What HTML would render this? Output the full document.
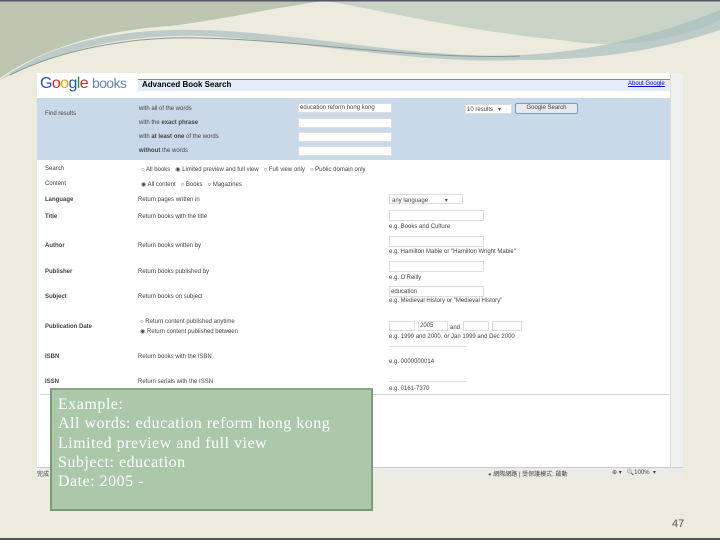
<!DOCTYPE html>
<html><head><meta charset="utf-8"><style>
*{margin:0;padding:0;box-sizing:border-box}
body{width:720px;height:540px;position:relative;overflow:hidden;background:#ecebdd;font-family:"Liberation Sans",Arial,sans-serif}
.a{position:absolute;white-space:nowrap}
.s{font-size:6px;color:#444}
.b{font-weight:bold}
.in{position:absolute;background:#fff;border:1px solid #ddd}
</style></head><body>
<svg class="a" style="left:0;top:0" width="720" height="80">
<path d="M0 0H720V20C680 40 620 50 560 40 460 30 380 10 320 0Z" fill="#c9d4c6"/>
<path d="M0 0H330C260 10 220 20 170 26 100 30 40 50 0 78Z" fill="#bcc6b0"/>
<path d="M0 80C40 50 100 28 200 30 300 32 420 60 520 55 600 52 670 30 720 10V30C660 50 600 60 520 60 420 65 300 40 200 36 110 34 50 55 0 80Z" fill="#a9bfc0" opacity=".7"/>
<path d="M10 75C60 50 130 36 200 38 300 40 420 60 520 56" stroke="#8a9a90" stroke-width="1" fill="none"/>
<rect x="0" y="0" width="720" height="1.5" fill="#556"/>
</svg>
<div class="a" style="left:37px;top:73px;width:646px;height:406px;background:#fff"></div>
<div class="a" style="left:670px;top:73px;width:13px;height:394px;background:#f0f0ef;border-left:1px solid #ddd"></div>
<div class="a" style="left:40px;top:75px;font-size:16px;color:#3366cc;letter-spacing:-.6px"><span style="color:#1a56c9">G</span><span style="color:#d22">o</span><span style="color:#e9a800">o</span><span style="color:#1a56c9">g</span><span style="color:#1a9a2a">l</span><span style="color:#d22">e</span> <span style="color:#6688aa;font-size:14px">books</span></div>
<div class="a" style="left:138px;top:79px;width:532px;height:12px;background:#e5ecf9;border-top:1px solid #6b90c9"></div>
<div class="a b" style="left:142px;top:80px;font-size:8px">Advanced Book Search</div>
<div class="a" style="left:628px;top:81px;font-size:6px;color:#00c;text-decoration:underline">About Google</div>
<div class="a" style="left:37px;top:98px;width:633px;height:62px;background:#c9d9ea"></div>
<div class="a s" style="left:45px;top:111px">Find results</div>
<div class="a s" style="left:139px;top:106px">with all of the words</div>
<div class="a s" style="left:139px;top:120px">with the <b>exact phrase</b></div>
<div class="a s" style="left:139px;top:134px">with <b>at least one</b> of the words</div>
<div class="a s" style="left:139px;top:148px"><b>without</b> the words</div>
<div class="in" style="left:298px;top:103px;width:94px;height:10px"></div><div class="a s" style="left:300px;top:105px">education reform hong kong</div>
<div class="in" style="left:298px;top:118px;width:94px;height:10px"></div>
<div class="in" style="left:298px;top:132px;width:94px;height:10px"></div>
<div class="in" style="left:298px;top:146px;width:94px;height:10px"></div>
<div class="in" style="left:465px;top:104px;width:47px;height:10px"></div><div class="a s" style="left:467px;top:106px">10 results &nbsp;&nbsp;▾</div>
<div class="a s" style="left:515px;top:103px;width:63px;height:11px;background:#e6e9ee;border:1px solid #7a9ac0;border-radius:2px;text-align:center;padding-top:1px">Google Search</div>
<div class="a s" style="left:45px;top:166px">Search</div>
<div class="a s" style="left:141px;top:166px">○ All books &nbsp; ◉ Limited preview and full view &nbsp; ○ Full view only &nbsp; ○ Public domain only</div>
<div class="a s" style="left:45px;top:181px">Content</div>
<div class="a s" style="left:141px;top:181px">◉ All content &nbsp; ○ Books &nbsp; ○ Magazines</div>
<div class="a s b" style="left:45px;top:197px">Language</div><div class="a s" style="left:138px;top:197px">Return pages written in</div>
<div class="in" style="left:389px;top:194px;width:74px;height:10px"></div><div class="a s" style="left:392px;top:197px">any language &nbsp;&nbsp;&nbsp;&nbsp;&nbsp;&nbsp;&nbsp;&nbsp;&nbsp;▾</div>
<div class="a s b" style="left:45px;top:214px">Title</div><div class="a s" style="left:138px;top:214px">Return books with the title</div>
<div class="in" style="left:389px;top:210px;width:95px;height:11px"></div><div class="a s" style="left:389px;top:224px">e.g. Books and Culture</div>
<div class="a s b" style="left:45px;top:243px">Author</div><div class="a s" style="left:138px;top:243px">Return books written by</div>
<div class="in" style="left:389px;top:236px;width:95px;height:11px"></div><div class="a s" style="left:389px;top:249px">e.g. Hamilton Mabie or "Hamilton Wright Mabie"</div>
<div class="a s b" style="left:45px;top:269px">Publisher</div><div class="a s" style="left:138px;top:269px">Return books published by</div>
<div class="in" style="left:389px;top:261px;width:95px;height:11px"></div><div class="a s" style="left:389px;top:275px">e.g. O'Reilly</div>
<div class="a s b" style="left:45px;top:294px">Subject</div><div class="a s" style="left:138px;top:294px">Return books on subject</div>
<div class="in" style="left:389px;top:286px;width:95px;height:11px"></div><div class="a s" style="left:391px;top:289px">education</div><div class="a s" style="left:389px;top:298px">e.g. Medieval History or "Medieval History"</div>
<div class="a s b" style="left:45px;top:324px">Publication Date</div>
<div class="a s" style="left:140px;top:319px">○ Return content published anytime</div>
<div class="a s" style="left:140px;top:328px">◉ Return content published between</div>
<div class="in" style="left:389px;top:321px;width:26px;height:10px"></div>
<div class="in" style="left:418px;top:321px;width:30px;height:10px"></div><div class="a s" style="left:420px;top:323px">2005</div>
<div class="a s" style="left:450px;top:325px">and</div>
<div class="in" style="left:463px;top:321px;width:26px;height:10px"></div>
<div class="in" style="left:492px;top:321px;width:30px;height:10px"></div>
<div class="a s" style="left:389px;top:334px">e.g. 1999 and 2000, or Jan 1999 and Dec 2000</div>
<div class="a s b" style="left:45px;top:354px">ISBN</div><div class="a s" style="left:138px;top:354px">Return books with the ISBN</div>
<div class="a" style="left:389px;top:346px;width:78px;height:1px;background:#ddd"></div><div class="a s" style="left:389px;top:359px">e.g. 0000000014</div>
<div class="a s b" style="left:45px;top:379px">ISSN</div><div class="a s" style="left:138px;top:379px">Return serials with the ISSN</div>
<div class="a" style="left:389px;top:381px;width:78px;height:1px;background:#ddd"></div><div class="a s" style="left:389px;top:386px">e.g. 0161-7370</div>
<div class="a" style="left:40px;top:394px;width:630px;height:1px;background:#c9d9ea"></div>
<div class="a" style="left:37px;top:467px;width:646px;height:12px;background:#ecebe6;border-top:1px solid #ccc"></div>
<div class="a s" style="left:37px;top:469px;font-family:'Noto Sans CJK TC',sans-serif">完成</div>
<div class="a s" style="left:488px;top:469px;font-family:'Liberation Sans','Noto Sans CJK TC',sans-serif"><span style="color:#3a7ac0">●</span> 網際網路 | 受保護模式: 啟動</div>
<div class="a s" style="left:612px;top:469px">⊕ ▾ &nbsp; 🔍100% &nbsp;▾</div>
<div class="a" style="left:50px;top:388px;width:323px;height:123px;background:#abc8ab;border:2px solid #7c9b7a;border-top-color:#86a584"></div>
<div class="a" style="left:58px;top:395px;font-family:'Liberation Serif',serif;font-size:16px;letter-spacing:0.5px;line-height:19.3px;color:#fff">Example:<br>All words: education reform hong kong<br>Limited preview and full view<br>Subject: education<br>Date: 2005 -</div>
<div class="a" style="left:672px;top:518px;font-size:11px;color:#555">47</div>
<div class="a" style="left:0;top:538px;width:720px;height:2px;background:#555"></div>
</body></html>
